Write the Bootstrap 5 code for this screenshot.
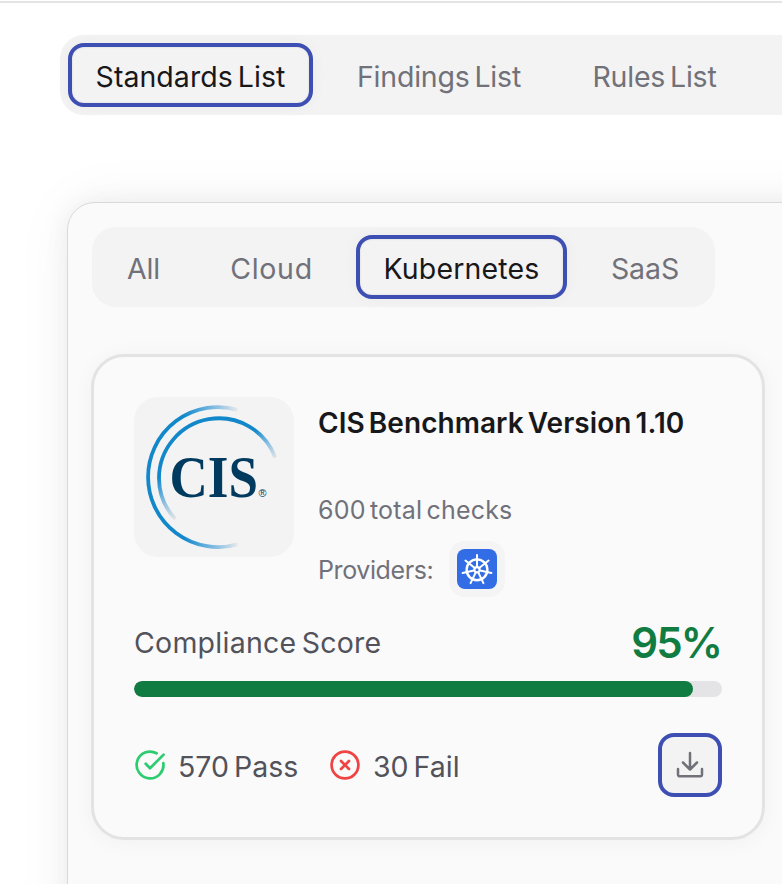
<!DOCTYPE html>
<html lang="en">
<head>
<meta charset="utf-8">
<meta name="viewport" content="width=device-width, initial-scale=1">
<title>Compliance Standards</title>
<link href="https://cdn.jsdelivr.net/npm/bootstrap@5.3.0/dist/css/bootstrap.min.css" rel="stylesheet">
<style>
  body { font-family: Inter, sans-serif; font-size: 28.5px; background: #fff; color: #71717a; height: 884px; overflow: hidden; line-height: 32px; word-spacing: -3px; }
  .top-rule { height: 2px; margin-top: 1px; background: #e4e4e4; }
  .tab-strip { background: #f3f3f3; border-radius: 24px; padding: 8px; gap: 16px; height: 80px; }
  .main-strip { margin: 32px 0 0 60px; border-radius: 24px 0 0 24px; }
  .sub-strip { width: 623px; }
  .tab-strip .nav-link { height: 64px; border-radius: 16px; color: #71717a; padding: 4px 0 0; white-space: nowrap; display: flex; align-items: center; justify-content: center; border: 0; }
  .tab-strip .nav-link.active { color: #18181b; background: #f3f3f3; border: 4px solid #3e4fb3; box-shadow: 0 0 16px rgba(0,0,0,.035), inset 0 0 2px rgba(0,0,0,.15); }
  .w-standards { width: 245px; letter-spacing: .05px; } .w-findings { width: 220px; letter-spacing: -.2px; } .w-rules { width: 179px; letter-spacing: -.2px; }
  .w-all { width: 87px; letter-spacing: -.1px; } .w-cloud { width: 137px; letter-spacing: .7px; } .w-kube { width: 211px; letter-spacing: .15px; } .w-saas { width: 124px; letter-spacing: -.1px; }
  .panel { margin: 87px 0 0 67px; width: 900px; height: 800px; border: 1px solid #d9d9da; border-radius: 28px; background: #fafafa; padding: 24px; box-shadow: 0 0 60px rgba(0,0,0,.05), 0 0 24px rgba(0,0,0,.06); }
  .std-card { margin: 47px 0 0 -1px; width: 674px; height: 486px; border: 3px solid #e3e3e3; border-radius: 33px; background: #fafafa; padding: 40px; box-shadow: 0 2px 22px rgba(0,0,0,.04); }
  .logo-box { width: 160px; height: 160px; border-radius: 24px; background: #f3f3f3; }
  .info { height: 200px; padding-top: 10px; font-size: 25px; }
  .info h2 { font-size: 28px; line-height: 32px; font-weight: 600; color: #18181b; letter-spacing: .05px; margin: 0; white-space: nowrap; }
  .checks { margin-top: 56px; height: 30px; line-height: 30px; letter-spacing: .2px; }
  .providers { margin-top: 16px; height: 56px; letter-spacing: -.4px; }
  .providers span { width: 131px; padding-top: 2px; }
  .prov-icon { width: 56px; height: 56px; border-radius: 16px; background: #f4f4f4; }
  .score-row { margin-top: 22px; height: 48px; color: #52525b; letter-spacing: .25px; }
  .score { font-size: 42px; font-weight: 600; color: #107c41; letter-spacing: -1.9px; margin-right: 1px; }
  .progress { margin-top: 14px; height: 16px; border-radius: 8px; background: #e4e4e7; }
  .progress-bar { background: #107c41; border-radius: 8px; }
  .stats { margin-top: 36px; height: 64px; color: #52525b; }
  .stats span { padding-top: 3px; white-space: nowrap; }
  .n-pass { width: 151px; margin-left: 12px; } .n-fail { margin-left: 12px; }
  .btn-dl { width: 64px; height: 64px; border: 4px solid #3e4fb3; border-radius: 16px; background: #f3f3f3; padding: 0; }
  svg { flex: none; display: block; }
</style>
</head>
<body>
<div class="top-rule"></div>
<nav class="nav tab-strip main-strip d-flex flex-nowrap">
  <a class="nav-link active w-standards">Standards List</a>
  <a class="nav-link w-findings">Findings List</a>
  <a class="nav-link w-rules">Rules List</a>
</nav>
<main class="panel">
  <nav class="nav tab-strip sub-strip d-flex flex-nowrap">
    <a class="nav-link w-all">All</a>
    <a class="nav-link w-cloud">Cloud</a>
    <a class="nav-link active w-kube">Kubernetes</a>
    <a class="nav-link w-saas">SaaS</a>
  </nav>
  <section class="std-card">
    <div class="d-flex gap-4">
      <div class="logo-box">
        <svg width="160" height="160" viewBox="0 0 160 160" fill="none" stroke-width="3.8">
          <defs>
            <linearGradient id="outer" gradientUnits="userSpaceOnUse" x1="50" y1="0" x2="104" y2="0"><stop offset="0" stop-color="#1288cb"/><stop offset=".35" stop-color="#5aa9db"/><stop offset=".65" stop-color="#93c3e4"/><stop offset="1" stop-color="#e9eaeb"/></linearGradient>
            <linearGradient id="inner" gradientUnits="userSpaceOnUse" x1="118" y1="36" x2="141" y2="62"><stop offset="0" stop-color="#1288cb"/><stop offset=".55" stop-color="#8fc2e4"/><stop offset="1" stop-color="#e3e5e6"/></linearGradient>
            <linearGradient id="tail" gradientUnits="userSpaceOnUse" x1="25" y1="81" x2="41" y2="122"><stop offset="0" stop-color="#1288cb"/><stop offset=".5" stop-color="#7fb9e0"/><stop offset="1" stop-color="#e3e5e6"/></linearGradient>
          </defs>
          <path stroke="url(#outer)" d="M103.500 12.800A70 70 0 1 0 103.500 147.300"/>
          <path stroke="url(#inner)" d="M25 81A60 60 0 0 1 141.300 60.600"/>
          <path stroke="url(#tail)" d="M25 81A60 60 0 0 0 41.300 122"/>
          <g fill="#003b5f" font-family="Liberation Serif, serif" font-weight="700">
            <text x="35.500" y="99.500" font-size="59" textLength="88.500" lengthAdjust="spacingAndGlyphs">CIS</text>
            <text x="124.500" y="99.600" font-family="Liberation Sans, sans-serif" font-size="10.500" font-weight="400" textLength="8" lengthAdjust="spacingAndGlyphs">®</text>
          </g>
        </svg>
      </div>
      <div class="info">
        <h2>CIS Benchmark Version 1.10</h2>
        <div class="checks">600 total checks</div>
        <div class="providers d-flex align-items-center">
          <span>Providers:</span>
          <div class="prov-icon d-flex align-items-center justify-content-center">
            <svg width="40" height="40" viewBox="0 0 40 40" fill="none" stroke="#fff" stroke-linecap="round">
              <rect width="40" height="40" rx="8" fill="#326de6" stroke="none"/>
              <g transform="translate(20 20.8)">
                <circle r="10.4" stroke-width="2.4"/>
                <path id="spoke" stroke-width="2" d="M0-3.200V-14.800"/>
                <use href="#spoke" transform="rotate(51.43)"/><use href="#spoke" transform="rotate(102.86)"/><use href="#spoke" transform="rotate(154.29)"/><use href="#spoke" transform="rotate(205.71)"/><use href="#spoke" transform="rotate(257.14)"/><use href="#spoke" transform="rotate(308.57)"/>
                <circle r="2.6" stroke-width="2.2"/>
              </g>
            </svg>
          </div>
        </div>
      </div>
    </div>
    <div class="score-row d-flex align-items-center justify-content-between">
      <span>Compliance Score</span><span class="score">95%</span>
    </div>
    <div class="progress"><div class="progress-bar" style="width:95%"></div></div>
    <div class="stats d-flex align-items-center">
      <svg width="32" height="32" viewBox="0 0 32 32" fill="none" stroke="#2ecc71" stroke-width="2.7" stroke-linecap="round" stroke-linejoin="round"><path d="M22.600 4.300A13.400 13.400 0 1 0 29.300 14"/><path d="M11.700 14.700L16 19.200 29.600 5.600"/></svg>
      <span class="n-pass">570 Pass</span>
      <svg width="32" height="32" viewBox="0 0 32 32" fill="none" stroke="#ef4444" stroke-width="2.7" stroke-linecap="round"><circle cx="16" cy="16" r="13.4"/><path d="M12 12l8 8M20 12l-8 8"/></svg>
      <span class="n-fail">30 Fail</span>
      <button class="btn btn-dl ms-auto d-flex align-items-center justify-content-center" aria-label="Download">
        <svg width="32" height="32" viewBox="0 0 32 32" fill="none" stroke="#71717a" stroke-width="2.5" stroke-linecap="round" stroke-linejoin="round"><path d="M16 4v16M9 13.500l7 7 7-7M4 20v5.500a1.800 1.800 0 0 0 1.800 1.800h20.400a1.800 1.800 0 0 0 1.800-1.800V20"/></svg>
      </button>
    </div>
  </section>
</main>
<script src="https://cdn.jsdelivr.net/npm/bootstrap@5.3.0/dist/js/bootstrap.bundle.min.js"></script>
</body>
</html>
